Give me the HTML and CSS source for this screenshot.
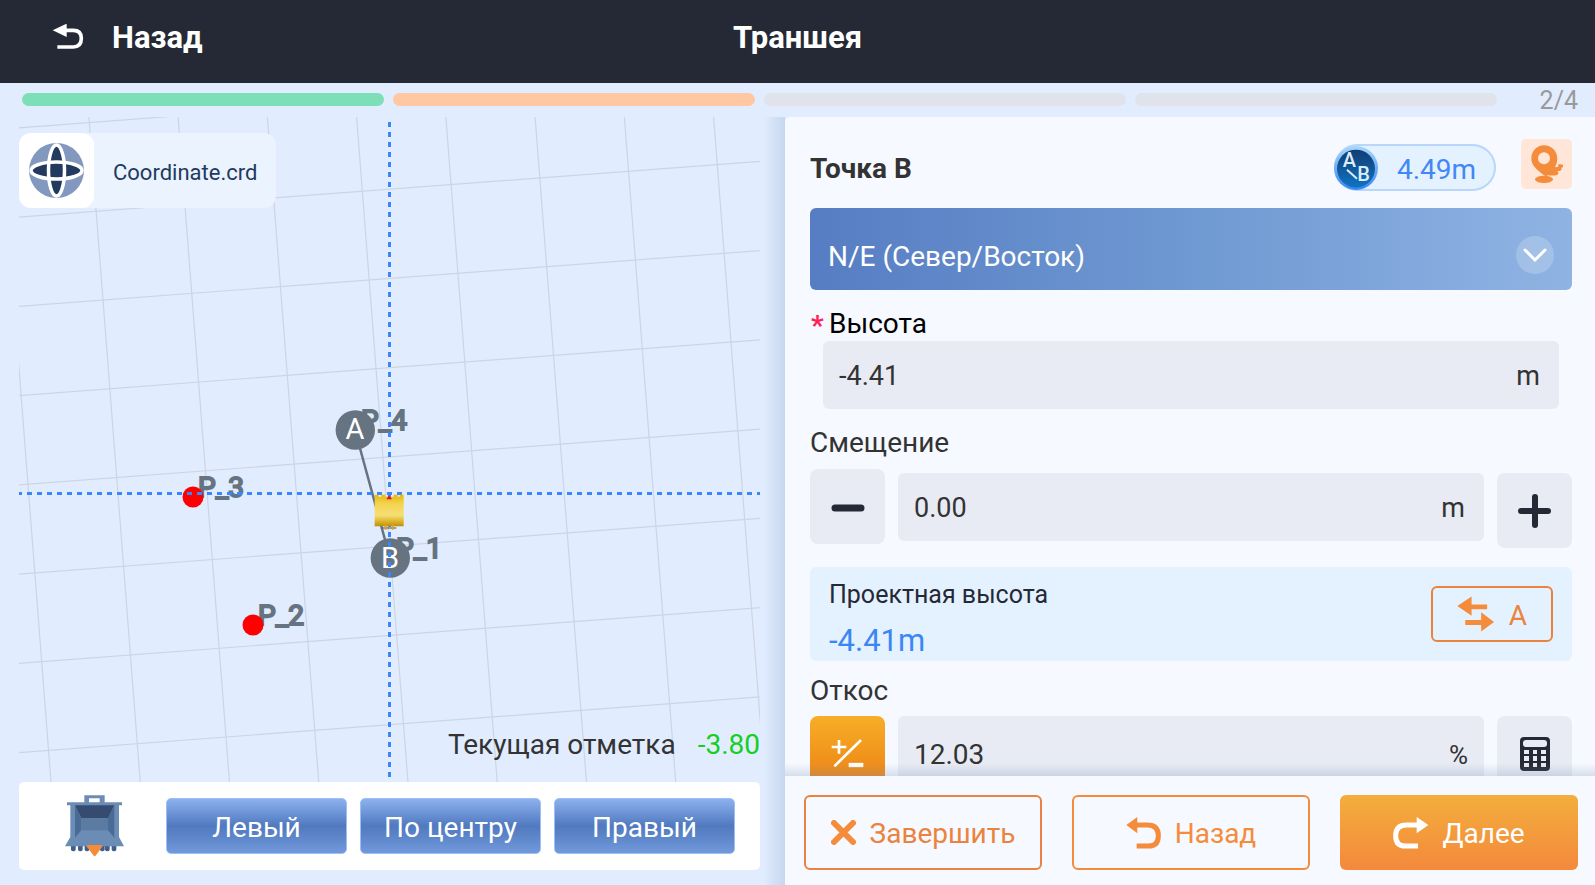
FILE: index.html
```
<!DOCTYPE html>
<html lang="ru">
<head>
<meta charset="utf-8">
<meta name="viewport" content="width=device-width, initial-scale=1">
<title>Траншея</title>
<link rel="stylesheet" href="styles.css">
</head>
<body class="app">
<header class="topbar">
  <button class="topbar-back" type="button">
    <svg width="32" height="27" viewBox="156 69 96 81" aria-hidden="true"><path d="M158 88 200 68V108Z" fill="#fff"/><path d="M196 88H220Q244 88 244 112Q244 138 220 138H172" fill="none" stroke="#fff" stroke-width="11"/></svg>
    <span>Назад</span>
  </button>
  <h1 class="topbar-title">Траншея</h1>
</header>

<div class="steps">
  <div class="steps-bars">
    <span class="step step-done"></span>
    <span class="step step-current"></span>
    <span class="step"></span>
    <span class="step"></span>
  </div>
  <span class="steps-count">2/4</span>
</div>

<main class="content">
  <section class="plan">
    <div class="map">
      <svg class="map-canvas" role="img" aria-label="План">
        <g transform="matrix(.997 -.075 .077 .997 84 183)" fill="none" stroke="#ccd5e2" stroke-width="1.2">
          <path d="M-89-300V800M0-300V800M89-300V800M178-300V800M267-300V800M356-300V800M445-300V800M534-300V800M623-300V800M712-300V800"/>
          <path d="M-200-178H800M-200-89H800M-200 0H800M-200 89H800M-200 178H800M-200 267H800M-200 356H800M-200 445H800M-200 534H800"/>
        </g>
        <g class="map-label">
          <text x="342" y="313">P_4</text>
          <text x="377" y="441">P_1</text>
          <text x="179" y="380">P_3</text>
          <text x="239" y="508">P_2</text>
        </g>
        <circle cx="174" cy="380" r="10.5" fill="#f00"/>
        <circle cx="234" cy="508" r="10.5" fill="#f00"/>
        <path d="M336 313 371 441" stroke="#667380" stroke-width="2.5"/>
        <circle cx="336.3" cy="313" r="19.7" fill="#667380"/>
        <circle cx="371.3" cy="441" r="19.7" fill="#667380"/>
        <g class="map-node">
          <text x="336" y="322">A</text>
          <text x="371" y="451">B</text>
        </g>
        <path d="M370.5 5V700M-2 376.500H2000" fill="none" stroke="#3a86fb" stroke-width="3" stroke-dasharray="5 5"/>
        <svg x="355" y="377" width="31" height="36" viewBox="163 311 93 108">
          <defs><linearGradient id="machine" x1="0" y1="0" x2="0" y2="1"><stop offset="0" stop-color="#e8b806"/><stop offset=".3" stop-color="#f3d552"/><stop offset=".65" stop-color="#f6de74"/><stop offset=".9" stop-color="#d3a818"/><stop offset="1" stop-color="#b8900c"/></linearGradient></defs>
          <path d="M165 313h12v6h8v-6h12v6h25v-6h12v6h6v-6h12v95h-87z" fill="url(#machine)"/>
          <path d="M200 327 208.500 314 217 327Z" fill="#e8122a"/>
          <path d="M186 413h44" stroke="#667380" stroke-width="4"/>
          <path d="M198 400v18M219 400v18" stroke="#e89b1c" stroke-width="6"/>
        </svg>
      </svg>
      <button class="crs" type="button">
        <span class="crs-icon">
          <svg width="55" height="55" viewBox="0 0 55 55" aria-hidden="true"><circle cx="27.500" cy="27.500" r="27.500" fill="#8398bf"/><g fill="#223a5e"><ellipse cx="27.500" cy="27.500" rx="7.500" ry="25.500"/><ellipse cx="27.500" cy="27.500" rx="25.500" ry="8"/></g><g fill="none" stroke="#fff" stroke-width="3.500"><ellipse cx="27.500" cy="27.500" rx="8" ry="25.500"/><ellipse cx="27.500" cy="27.500" rx="25.500" ry="8.500"/></g></svg>
        </span>
        <span class="crs-name">Coordinate.crd</span>
      </button>
      <p class="elevation">Текущая отметка <output class="elevation-value">-3.80</output></p>
    </div>
    <div class="bucket-bar">
      <svg class="bucket" width="59" height="62" viewBox="195 74 177 186" aria-hidden="true">
        <g fill="#3f5f8c"><rect x="213" y="222" width="14" height="21" rx="6"/><rect x="234" y="222" width="14" height="21" rx="6"/><rect x="254" y="222" width="14" height="21" rx="6"/><rect x="300" y="222" width="14" height="21" rx="6"/><rect x="315" y="222" width="14" height="21" rx="6"/><rect x="335" y="222" width="14" height="21" rx="6"/></g>
        <path d="M253 75H314V96H366V105H357V200L372 228H195L211 200V105H201V96H253ZM267 84V96H299V84Z" fill="#6a8cb5" fill-rule="evenodd"/>
        <path d="M225 105H343L324 144H244Z" fill="#354b70"/>
        <path d="M225 105 244 144V180L225 202ZM343 105 324 144V180L343 202Z" fill="#4a6b95"/>
        <path d="M244 144H324V180H244Z" fill="#5b7ba3"/>
        <path d="M264 224H303Q310 224 306 230L288 255Q284 261 280 255L261 230Q258 224 264 224Z" fill="#f48c3c"/>
      </svg>
      <button class="edge-button" type="button">Левый</button>
      <button class="edge-button" type="button">По центру</button>
      <button class="edge-button" type="button">Правый</button>
    </div>
  </section>

  <section class="panel">
    <div class="form">
      <div class="form-head">
        <h2 class="form-title">Точка B</h2>
        <div class="distance">
          <svg width="44" height="47" viewBox="102 72 132 141" aria-hidden="true">
            <defs><linearGradient id="ring" x1="0" y1="0" x2="0" y2="1"><stop offset="0" stop-color="#a5d8fb"/><stop offset="1" stop-color="#3a86f5"/></linearGradient><linearGradient id="disc" x1="0" y1="0" x2="0" y2="1"><stop offset="0" stop-color="#113d72"/><stop offset="1" stop-color="#0f74c4"/></linearGradient></defs>
            <circle cx="168" cy="144" r="66" fill="url(#ring)"/><circle cx="168" cy="146" r="57" fill="url(#disc)"/>
            <path d="M141 149 171 176" stroke="#dcecf8" stroke-width="6"/>
            <g class="distance-mark"><text x="148" y="141">A</text><text x="191" y="182">B</text></g>
          </svg>
          <span class="distance-value">4.49m</span>
        </div>
        <button class="pin-button" type="button" aria-label="Взять точку">
          <svg width="33" height="39" viewBox="695 74 99 117" aria-hidden="true"><path d="M737 75C759 75 777 92 777 115Q777 128 770 141Q775 139 781 139Q777 133 782 132Q797 131 796 137Q794 142 788 143Q793 147 786 151L777 153Q783 159 777 163Q768 167 749 165Q743 170 737 165C713 147 699 134 699 114C699 92 716 75 737 75ZM737 96A18 18 0 1 0 737 132A18 18 0 1 0 737 96Z" fill="#f48c3c" fill-rule="evenodd"/><ellipse cx="737" cy="177" rx="27" ry="11" fill="#f48c3c"/></svg>
        </button>
      </div>

      <div class="mode">
        <select class="mode-select" aria-label="Система координат"><option>N/E (Север/Восток)</option></select>
        <svg class="mode-arrow" width="38" height="38" viewBox="0 0 38 38" aria-hidden="true"><circle cx="19" cy="19" r="19" fill="#fff" fill-opacity=".2"/><path d="M9 14 19 24 29 14" fill="none" stroke="#fff" stroke-width="3" stroke-linecap="round"/></svg>
      </div>

      <label class="label label-required" for="height"><span class="required">*</span>Высота</label>
      <div class="field field-inset"><input class="field-input" id="height" value="-4.41"><span class="unit">m</span></div>

      <label class="label label-offset" for="offset">Смещение</label>
      <div class="row row-offset">
        <button class="square-button" type="button" aria-label="Уменьшить"><svg width="34" height="34" viewBox="0 0 34 34" aria-hidden="true"><path d="M4 18H30" stroke="#252935" stroke-width="7" stroke-linecap="round"/></svg></button>
        <div class="field field-centered"><input class="field-input" id="offset" value="0.00"><span class="unit">m</span></div>
        <button class="square-button square-button-low" type="button" aria-label="Увеличить"><svg width="34" height="34" viewBox="0 0 34 34" aria-hidden="true"><path d="M3 17H30M17 3V31" stroke="#252935" stroke-width="6" stroke-linecap="round"/></svg></button>
      </div>

      <div class="design">
        <div>
          <p class="design-label">Проектная высота</p>
          <output class="design-value">-4.41m</output>
        </div>
        <button class="swap-button" type="button">
          <svg width="38" height="36" viewBox="471 498 114 108" aria-hidden="true"><path d="M472 528 515 499V523H562V538H515V557ZM496 570H544V547L583 576 544 605V585H496Z" fill="#f48c3c"/></svg>
          <span class="swap-name">A</span>
        </button>
      </div>

      <label class="label label-slope" for="slope">Откос</label>
      <div class="row">
        <button class="square-button sign-button" type="button" aria-label="Сменить знак"><svg width="34" height="30" viewBox="150 240 102 90" aria-hidden="true"><path d="M152 264H196M174 243V284M160 322 240 243" fill="none" stroke="#fff" stroke-width="8"/><path d="M203 318H247" stroke="#fff" stroke-width="13"/></svg></button>
        <div class="field field-tall"><input class="field-input" id="slope" value="12.03"><span class="unit">%</span></div>
        <button class="square-button" type="button" aria-label="Калькулятор"><svg width="30" height="34" viewBox="0 0 30 34" aria-hidden="true"><rect width="30" height="34" rx="4" fill="#252935"/><rect x="3" y="3" width="24" height="7" rx="3" fill="#e8ebf3"/><path d="M4 13h5v4h-5zM13 13h4v4h-4zM21 13h5v4h-5zM4 19h5v5h-5zM13 19h4v5h-4zM21 19h5v5h-5zM4 26h5v4h-5zM13 26h4v4h-4zM21 26h5v4h-5z" fill="#e8ebf3"/></svg></button>
      </div>
    </div>

    <footer class="actions">
      <button class="action" type="button">
        <svg width="25" height="25" viewBox="0 0 25 25" aria-hidden="true"><path d="M3 3 22 22M22 3 3 22" stroke="#f48c3c" stroke-width="6" stroke-linecap="round"/></svg>
        <span class="action-name">Завершить</span>
      </button>
      <button class="action action-back" type="button">
        <svg width="35" height="32" viewBox="1040 469 105 96" aria-hidden="true"><path d="M1041 493 1074 469V518Z" fill="#f48c3c"/><path d="M1072 493H1104Q1137 493 1137 525Q1137 556 1108 556H1072" fill="none" stroke="#f48c3c" stroke-width="15"/></svg>
        <span class="action-name">Назад</span>
      </button>
      <button class="action action-next" type="button">
        <svg width="35" height="32" viewBox="641 469 105 96" aria-hidden="true"><path d="M747 493 712 469V518Z" fill="#fff"/><path d="M714 493H682Q649 493 649 525Q649 556 678 556H716" fill="none" stroke="#fff" stroke-width="15"/></svg>
        <span class="action-name">Далее</span>
      </button>
    </footer>
  </section>
</main>
</body>
</html>
```
FILE: styles.css
```
* {
  box-sizing: border-box;
}

.app {
  display: flex;
  flex-direction: column;
  height: 100vh;
  margin: 0;
  overflow: hidden;
  background: #e1ecff;
  color: #333;
  font-family: Roboto, "Liberation Sans", sans-serif;
  font-size: 28px;
  line-height: 32px;
}

button,
input,
select {
  margin: 0;
  padding: 0;
  border: 0;
  color: inherit;
  font: inherit;
}

button {
  cursor: pointer;
}

/* Header */

.topbar {
  display: grid;
  grid-template-columns: 1fr auto 1fr;
  align-items: center;
  flex: none;
  height: 83px;
  padding: 0 52px 8px;
  background: #252935;
  color: #fff;
}

.topbar-back {
  display: flex;
  align-items: center;
  justify-self: start;
  gap: 28px;
  background: none;
  font-size: 31px;
  font-weight: 700;
}

.topbar-title {
  margin: 0;
  font-size: 31px;
  font-weight: 700;
}

/* Progress */

.steps {
  display: flex;
  align-items: center;
  flex: none;
  height: 34px;
  padding: 0 17px 0 22px;
}

.steps-bars {
  display: flex;
  flex: 1;
  gap: 9px;
  padding-bottom: 2px;
}

.step {
  flex: 1;
  height: 13px;
  border-radius: 7px;
  background: #e0e3eb;
}

.step-done {
  background: #7cdfb8;
}

.step-current {
  background: #ffc7a2;
}

.steps-count {
  width: 81px;
  padding-top: 2px;
  color: #999;
  font-size: 25px;
  text-align: right;
}

/* Plan view */

.content {
  display: grid;
  grid-template-columns: 785fr 810fr;
  flex: 1;
  min-height: 0;
}

.plan {
  display: flex;
  flex-direction: column;
  min-width: 0;
  padding: 0 25px 15px 19px;
  background: linear-gradient(to left, #c6d7ee, #e1ecff 22px);
}

.map {
  position: relative;
  flex: 1;
  min-height: 0;
  overflow: hidden;
}

.map-canvas {
  display: block;
  width: 100%;
  height: 100%;
}

.map-label {
  fill: #667380;
  stroke: #667380;
  stroke-width: 2px;
  font-size: 28px;
}

.map-node {
  fill: #fff;
  font-size: 29px;
  text-anchor: middle;
}

.crs {
  position: absolute;
  top: 16px;
  left: 0;
  display: flex;
  align-items: center;
  height: 75px;
  border-radius: 12px;
  background: #ebf3ff;
  color: #223a5e;
}

.crs-icon {
  display: grid;
  place-items: center;
  width: 75px;
  height: 75px;
  border-radius: 12px;
  background: #fff;
}

.crs-name {
  padding: 5px 19px 0;
  font-size: 22px;
}

.elevation {
  position: absolute;
  right: 0;
  bottom: 21px;
  display: flex;
  gap: 22px;
  margin: 0;
}

.elevation-value {
  color: #14cf24;
}

.bucket-bar {
  display: flex;
  align-items: center;
  flex: none;
  gap: 13px;
  height: 88px;
  padding: 0 25px 0 46px;
  border-radius: 5px;
  background: #fff;
}

.bucket {
  flex: none;
  margin-right: 29px;
}

.edge-button {
  flex: 1;
  height: 56px;
  padding-top: 4px;
  border: 1px solid #9cc0f5;
  border-radius: 5px;
  background: linear-gradient(#8cb1ee, #5079bf 50%, #7199da);
  color: #fff;
}

/* Form panel */

.panel {
  display: flex;
  flex-direction: column;
  min-width: 0;
  min-height: 0;
  border-top-left-radius: 5px;
  background: #f6f9ff;
}

.form {
  flex: 1;
  min-height: 0;
  padding: 22px 23px 0 25px;
  overflow: hidden;
}

.form-head {
  display: flex;
  align-items: center;
  height: 50px;
  margin-bottom: 19px;
}

.form-title {
  flex: 1;
  margin: 0;
  padding-top: 10px;
  font-size: 28px;
  font-weight: 700;
}

.distance {
  display: flex;
  align-items: center;
  width: 162px;
  height: 47px;
  margin: 7px 25px 0 0;
  border-radius: 24px;
  background: #e4f2ff;
  box-shadow: inset 0 0 0 2px #b9d6fb;
  color: #4287f5;
}

.distance-mark {
  fill: #dcecf8;
  font-size: 60px;
  font-weight: 500;
  text-anchor: middle;
}

.distance-value {
  padding: 5px 0 0 19px;
}

.pin-button {
  display: grid;
  place-items: center;
  width: 51px;
  height: 50px;
  border-radius: 5px;
  background: #ffe6d8;
}

.mode {
  display: grid;
  align-items: center;
  margin-bottom: 18px;
}

.mode-select,
.mode-arrow {
  grid-area: 1 / 1;
}

.mode-select {
  width: 100%;
  height: 82px;
  padding: 16px 60px 0 18px;
  border-radius: 6px;
  appearance: none;
  background: linear-gradient(90deg, #567dc3, #6f99d2 50%, #86abdf 85%, #8fb4e2);
  color: #fff;
}

.mode-arrow {
  justify-self: end;
  margin: 12px 18px 0 0;
  pointer-events: none;
}

.label {
  display: block;
}

.label-required {
  display: flex;
  margin-bottom: 1px;
  color: #000;
}

.required {
  width: 19px;
  padding: 3px 0 0 1px;
  color: #ff2157;
  font-weight: 700;
  line-height: 29px;
}

.label-offset {
  margin: 18px 0 10px;
}

.label-slope {
  margin: 14px 0 9px;
}

.field {
  display: flex;
  align-items: center;
  flex: 1;
  height: 68px;
  padding: 2px 19px 0 16px;
  border-radius: 6px;
  background: #e8ebf3;
  font-size: 27px;
}

.field-inset {
  margin: 0 13px;
}

.field-centered {
  margin-top: 4px;
}

.field-tall {
  height: 75px;
  padding-right: 16px;
  font-size: 28px;
}

.field-tall .unit {
  font-size: 26px;
}

.field-input {
  flex: 1;
  min-width: 0;
  background: none;
  outline: 0;
}

.row {
  display: flex;
  align-items: flex-start;
  gap: 13px;
}

.row-offset {
  margin-bottom: 19px;
}

.square-button {
  display: grid;
  place-items: center;
  flex: none;
  width: 75px;
  height: 75px;
  border-radius: 8px;
  background: #e8ebf3;
}

.square-button-low {
  margin-top: 4px;
}

.sign-button {
  background: linear-gradient(#f7ae27, #ec7d12);
}

.design {
  display: flex;
  align-items: center;
  justify-content: space-between;
  height: 94px;
  padding: 0 19px;
  border-radius: 6px;
  background: #e4f2ff;
}

.design-label {
  margin: 8px 0 14px;
  color: #252935;
  font-size: 25px;
}

.design-value {
  display: block;
  color: #3a86f5;
  font-size: 31px;
}

.swap-button {
  display: flex;
  align-items: center;
  justify-content: flex-end;
  gap: 14px;
  width: 122px;
  height: 56px;
  padding: 0 24px;
  border: 2px solid #ea833e;
  border-radius: 6px;
  background: none;
  color: #ea833e;
}

.swap-name {
  padding-top: 4px;
}

/* Footer */

.actions {
  position: relative;
  display: flex;
  flex: none;
  gap: 30px;
  padding: 19px 17px 15px 19px;
  background: #f6f9ff;
}

.actions::before {
  content: "";
  position: absolute;
  right: 0;
  bottom: 100%;
  left: 0;
  height: 13px;
  background: linear-gradient(#7890b400, #7890b440);
}

.action {
  display: flex;
  align-items: center;
  justify-content: center;
  flex: 1;
  gap: 14px;
  height: 75px;
  border: 2px solid #ea833e;
  border-radius: 6px;
  background: none;
  color: #ea833e;
}

.action-name {
  padding-top: 2px;
}

.action-back {
  border-color: #f48c3c;
  color: #f48c3c;
}

.action-next {
  border-color: transparent;
  background: linear-gradient(#f3ae3c, #f4893c) border-box;
  color: #fff;
}
```
